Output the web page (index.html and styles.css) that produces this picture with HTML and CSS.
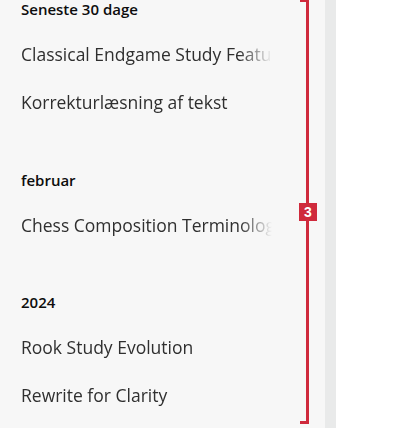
FILE: index.html
```html
<!DOCTYPE html>
<html lang="da">
<head>
<meta charset="utf-8">
<link rel="stylesheet" href="styles.css">
</head>
<body>
<div class="layout">
  <nav class="sidebar">
    <div class="history">
      <section class="group first">
        <h3 class="group-title">Seneste 30 dage</h3>
        <a class="item"><span class="item-text">Classical Endgame Study Features</span></a>
        <a class="item"><span class="item-text">Korrekturlæsning af tekst</span></a>
      </section>
      <section class="group">
        <h3 class="group-title">februar</h3>
        <a class="item"><span class="item-text">Chess Composition Terminology</span></a>
      </section>
      <section class="group">
        <h3 class="group-title">2024</h3>
        <a class="item"><span class="item-text">Rook Study Evolution</span></a>
        <a class="item"><span class="item-text">Rewrite for Clarity</span></a>
      </section>
    </div>
    <div class="bracket">
      <span class="badge">3</span>
    </div>
  </nav>
  <div class="scrollbar"></div>
  <main class="main"></main>
</div>
</body>
</html>
```

FILE: styles.css
```css
html, body {
  margin: 0;
  padding: 0;
  height: 100%;
  overflow: hidden;
}
body {
  font-family: "Open Sans", "Noto Sans", sans-serif;
  background: #ffffff;
}
.layout {
  display: flex;
  height: 428px;
}
.sidebar {
  position: relative;
  width: 325px;
  flex: none;
  background: #f7f7f7;
}
.history {
  margin-top: -1px;
}
.group {
  padding-top: 43px;
}
.group.first {
  padding-top: 0;
}
.group-title {
  margin: 0 0 12px 0;
  padding-left: 21px;
  font-size: 15px;
  line-height: 20px;
  font-weight: 600;
  color: #0d0d0d;
}
.item {
  display: block;
  height: 47.75px;
  line-height: 47.75px;
  padding-left: 21px;
  width: 251px;
  overflow: hidden;
  white-space: nowrap;
  font-size: 17.5px;
  color: #2f2f2f;
  -webkit-mask-image: linear-gradient(to right, #000 88%, transparent 100%);
  mask-image: linear-gradient(to right, #000 88%, transparent 100%);
}
.bracket {
  position: absolute;
  left: 300px;
  top: -1px;
  width: 9px;
  height: 425px;
  border: 3px solid #cf2a3c;
  border-left: none;
  box-sizing: border-box;
}
.badge {
  position: absolute;
  left: -1px;
  top: 201px;
  width: 18px;
  height: 18px;
  background: #cf2a3c;
  color: #ffffff;
  font-family: "Liberation Sans", sans-serif;
  font-weight: 700;
  font-size: 14px;
  line-height: 18px;
  text-align: center;
}
.scrollbar {
  width: 11px;
  flex: none;
  background: #e9eaea;
}
.main {
  flex: 1;
  background: #ffffff;
}
```
